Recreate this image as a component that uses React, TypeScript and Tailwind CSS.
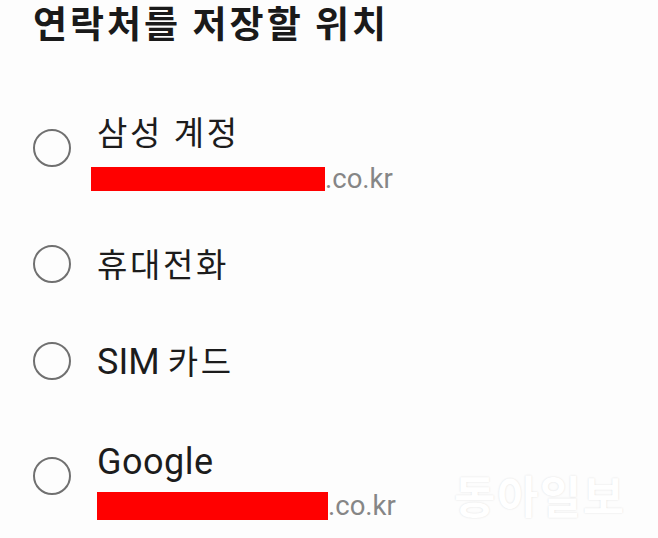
import React from "react";

const Radio = () => (
  <div className="ml-[33px] w-[38px] h-[38px] shrink-0 rounded-full border-2 border-[#707070]" />
);

const Ko = ({ children }: { children: React.ReactNode }) => (
  <span className="tracking-[2.6px]">{children}</span>
);

export default function App() {
  return (
    <div className="relative w-[658px] h-[538px] overflow-hidden bg-[#fdfdfd] font-['Roboto','Noto_Sans_CJK_KR',sans-serif] text-[#1c1c1c]">
      <div className="h-[81px] pl-[33px] pt-0">
        <h1 className="font-['Noto_Sans_CJK_KR',sans-serif] text-[37px] leading-[44px] font-semibold tracking-[3px] text-[#1a1a1a]">
          연락처를 저장할 위치
        </h1>
      </div>

      <div className="flex flex-col">
        <div className="flex h-[134px] items-center gap-[26px]">
          <Radio />
          <div className="mt-[8px] flex flex-col">
            <div className="text-[33px] leading-[40px]">
              <Ko>삼성 계정</Ko>
            </div>
            <div className="mt-[13px] ml-[-6px] flex h-[24px] items-center">
              <div className="h-[24px] w-[234px] bg-[#ff0000]" />
              <span className="text-[27.5px] leading-[24px] text-[#868686]">.co.kr</span>
            </div>
          </div>
        </div>

        <div className="flex h-[97px] items-center gap-[26px]">
          <Radio />
          <div className="mt-[4px] text-[33px] leading-[40px]">
            <Ko>휴대전화</Ko>
          </div>
        </div>

        <div className="flex h-[98px] items-center gap-[26px]">
          <Radio />
          <div className="mt-[2px] text-[33px] leading-[40px]">
            <span className="text-[36px]">SIM</span> <Ko>카드</Ko>
          </div>
        </div>

        <div className="flex h-[132px] items-center gap-[26px]">
          <Radio />
          <div className="mt-[8px] flex flex-col">
            <div className="text-[36px] leading-[42px] tracking-[0.5px]">Google</div>
            <div className="mt-[9px] flex h-[28px] items-center">
              <div className="h-[28px] w-[231px] bg-[#ff0000]" />
              <span className="text-[27.5px] leading-[28px] text-[#868686]">.co.kr</span>
            </div>
          </div>
        </div>
      </div>

      <div className="absolute left-[454px] top-[470px] font-['Noto_Sans_CJK_KR',sans-serif] text-[45px] font-bold leading-[50px] tracking-[1.5px] text-white [text-shadow:0_0_2px_rgba(0,0,0,0.13)]">
        동아일보
      </div>
    </div>
  );
}
